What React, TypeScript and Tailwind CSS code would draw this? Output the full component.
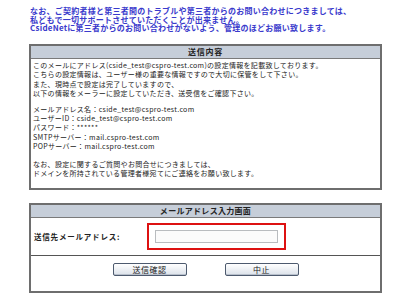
const jp = "font-['Noto_Sans_CJK_JP','Liberation_Sans',sans-serif]";

const infoLines = [
  'このメールにアドレス(cside_test@cspro-test.com)の設定情報を記載致しております。',
  'こちらの設定情報は、ユーザー様の重要な情報ですので大切に保管をして下さい。',
  'また、現時点で設定は完了していますので、',
  '以下の情報をメーラーに設定していただき、送受信をご確認下さい。',
];

const accountLines = [
  'メールアドレス名：cside_test@cspro-test.com',
  'ユーザーID：cside_test@cspro-test.com',
  'パスワード：******',
  'SMTPサーバー：mail.cspro-test.com',
  'POPサーバー：mail.cspro-test.com',
];

const noteLines = [
  'なお、設定に関するご質問やお問合せにつきましては、',
  'ドメインを所持されている管理者様宛てにご連絡をお願い致します。',
];

function Button({ label }: { label: string }) {
  return (
    <button className="w-[74px] h-[13px] rounded-[2px] border border-[#4d5a6e] bg-gradient-to-b from-white to-[#dce2ea] text-[8px] leading-[11px] tracking-[0.5px] text-[#222] shadow-[inset_0_-1px_0_#b8c0cc]">
      {label}
    </button>
  );
}

export default function App() {
  return (
    <div className={`w-[408px] h-[297px] bg-white overflow-hidden ${jp}`}>
      {/* top notice */}
      <div className="pl-[30px] pt-[7px] text-[8px] leading-[8.7px] font-bold text-[#3a3acc] tracking-[0.25px]">
        <div>なお、ご契約者様と第三者間のトラブルや第三者からのお問い合わせにつきましては、</div>
        <div>私どもで一切サポートさせていただくことが出来ません。</div>
        <div>CsideNetに第三者からのお問い合わせがないよう、管理のほどお願い致します。</div>
      </div>

      {/* 送信内容 */}
      <div className="ml-[29px] mt-[11px] w-[353px] border-2 border-[#6e6e6e]">
        <div className="h-[13px] bg-[#c6ced9] border-b border-[#7a7a7a] text-center text-[8px] leading-[12px] tracking-[0.7px] font-bold text-[#222]">
          送信内容
        </div>
        <div className="pl-[2px] pt-[2px] pb-[10px] text-[7px] leading-[9.2px] tracking-[0.3px] text-[#222]">
          {infoLines.map((l) => (
            <div key={l}>{l}</div>
          ))}
          <div className="h-[7px]" />
          {accountLines.map((l) => (
            <div key={l}>{l}</div>
          ))}
          <div className="h-[9px]" />
          {noteLines.map((l) => (
            <div key={l}>{l}</div>
          ))}
        </div>
      </div>

      {/* メールアドレス入力画面 */}
      <div className="ml-[29px] mt-[13px] w-[353px] border-2 border-[#6e6e6e]">
        <div className="h-[13px] bg-[#c6ced9] border-b border-[#7a7a7a] text-center text-[8px] leading-[12px] tracking-[0.3px] font-bold text-[#222]">
          メールアドレス入力画面
        </div>
        <div className="flex items-center h-[38px] border-b border-[#555]">
          <div className="w-[116px] pl-[3px] text-[7.5px] tracking-[0.8px] font-bold text-[#222]">送信先メールアドレス:</div>
          <div className="border-2 border-[#dd1111] px-[6px] py-[5px]">
            <input className="block w-[123px] h-[13px] border border-[#b9bcbf] bg-[#fbfbfb] outline-none" />
          </div>
        </div>
        <div className="h-[35px] flex justify-center gap-[38px] pt-[7px]">
          <Button label="送信確認" />
          <Button label="中止" />
        </div>
      </div>
    </div>
  );
}
